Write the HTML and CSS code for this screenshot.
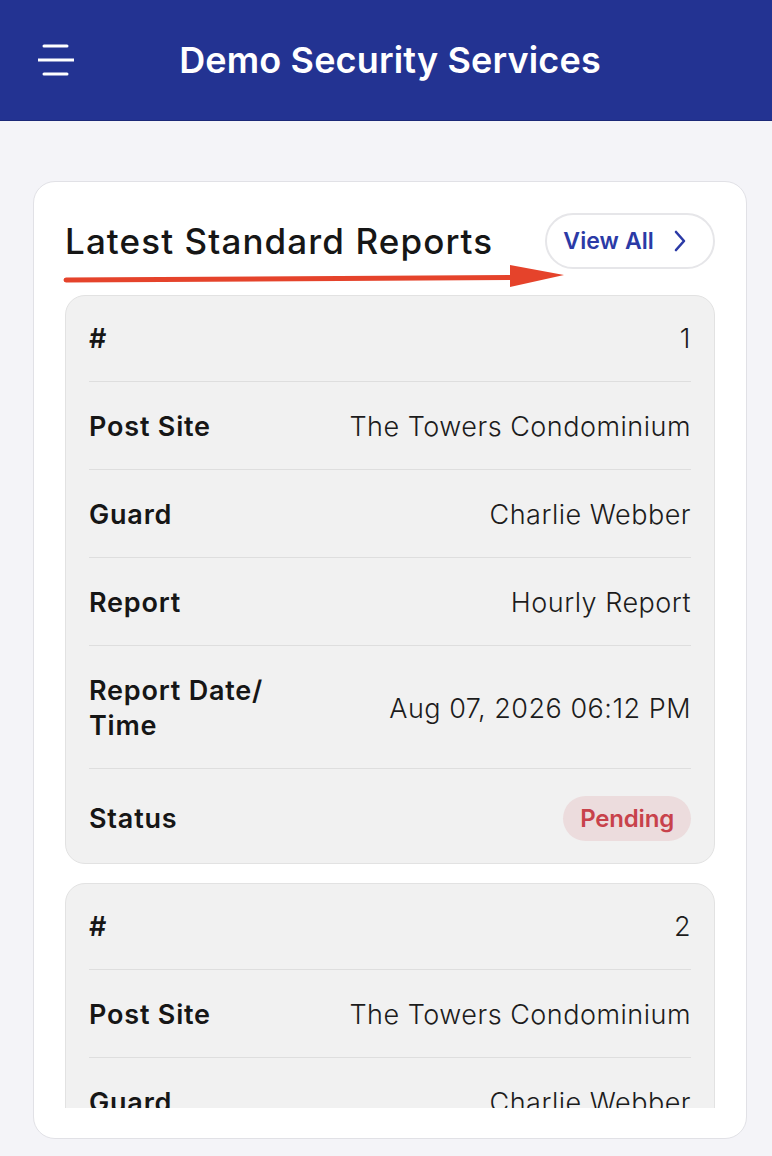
FILE: index.html
```html
<!DOCTYPE html>
<html lang="en">
<head>
    <meta charset="UTF-8">
    <meta name="viewport" content="width=device-width, initial-scale=1.0">
    <title>Demo Security Services</title>
    <link rel="stylesheet" href="styles.css">
</head>
<body>
    <header class="topbar">
        <button class="menu-btn" aria-label="Menu">
            <svg width="36" height="34" viewBox="0 0 36 34">
                <path d="M6 3H29M0 17H36M6 31H29" stroke="#fff" stroke-width="3" stroke-linecap="round"/>
            </svg>
        </button>
        <h1 class="topbar-title">Demo Security Services</h1>
        <span></span>
    </header>

    <main class="page">
        <section class="panel">
            <div class="panel-head">
                <h2>Latest Standard Reports</h2>
                <a class="view-all" href="#">View All
                    <svg width="14" height="22" viewBox="0 0 14 22">
                        <path d="M3 2L11 11L3 20" fill="none" stroke="#2b3aa6" stroke-width="2.6" stroke-linecap="round" stroke-linejoin="round"/>
                    </svg>
                </a>
                <!-- pointer under the heading -->
                <svg class="pointer" width="502" height="26" viewBox="0 0 502 26">
                    <path d="M3 15L450 12.5" stroke="#e5432b" stroke-width="5" stroke-linecap="round"/>
                    <polygon points="447,0 501,10 447,22" fill="#e5432b"/>
                </svg>
            </div>

            <div class="report-list">
                <div class="report">
                    <div class="row"><span class="label">#</span><span class="value">1</span></div>
                    <div class="row"><span class="label">Post Site</span><span class="value">The Towers Condominium</span></div>
                    <div class="row"><span class="label">Guard</span><span class="value">Charlie Webber</span></div>
                    <div class="row"><span class="label">Report</span><span class="value">Hourly Report</span></div>
                    <div class="row"><span class="label">Report Date/<br>Time</span><span class="value">Aug 07, 2026 06:12 PM</span></div>
                    <div class="row"><span class="label">Status</span><span class="badge">Pending</span></div>
                </div>
                <div class="report">
                    <div class="row"><span class="label">#</span><span class="value">2</span></div>
                    <div class="row"><span class="label">Post Site</span><span class="value">The Towers Condominium</span></div>
                    <div class="row"><span class="label">Guard</span><span class="value">Charlie Webber</span></div>
                    <div class="row"><span class="label">Report</span><span class="value">Hourly Report</span></div>
                    <div class="row"><span class="label">Report Date/<br>Time</span><span class="value">Aug 07, 2026 05:12 PM</span></div>
                    <div class="row"><span class="label">Status</span><span class="badge">Pending</span></div>
                </div>
            </div>
        </section>
    </main>
</body>
</html>
```

FILE: styles.css
```css
body {
    margin: 0;
    font-family: Inter, "Noto Sans", sans-serif;
    background-color: #f4f4f8;
    color: #1c1c1c;
}
.topbar {
    height: 121px;
    background-color: #233392;
    display: grid;
    grid-template-columns: 1fr auto 1fr;
    align-items: center;
    padding: 0 38px;
    box-sizing: border-box;
    border-bottom: 1px solid #1b2878;
}
.menu-btn {
    background: none;
    border: none;
    padding: 0;
    width: 36px;
    height: 34px;
    cursor: pointer;
}
.menu-btn svg {
    display: block;
}
.topbar-title {
    margin: 0;
    color: #fff;
    font-size: 36px;
    font-weight: 600;
    letter-spacing: 0.15px;
    position: relative;
    left: 4px;
}
.page {
    padding: 60px 25px 0 33px;
}
.panel {
    background-color: #fff;
    border: 1px solid #e1e1e6;
    border-radius: 22px;
    padding: 31px 31px 30px;
}
.panel-head {
    position: relative;
    display: flex;
    justify-content: space-between;
    align-items: center;
    margin-bottom: 26px;
}
.panel-head h2 {
    margin: 0;
    font-size: 35px;
    font-weight: 500;
    letter-spacing: 1.1px;
    color: #161616;
}
.view-all {
    display: flex;
    align-items: center;
    gap: 19px;
    height: 56px;
    box-sizing: border-box;
    padding: 0 26px 0 16px;
    border: 2px solid #e6e6e9;
    border-radius: 28px;
    color: #2b3aa6;
    font-size: 23px;
    font-weight: 600;
    text-decoration: none;
    letter-spacing: 0.1px;
}
.view-all svg {
    display: block;
}
.pointer {
    position: absolute;
    left: -2px;
    top: 52px;
}
.report-list {
    height: 813px;
    overflow: hidden;
    display: flex;
    flex-direction: column;
    gap: 19px;
}
.report {
    flex-shrink: 0;
    background-color: #f1f1f1;
    border: 1px solid #e2e2e2;
    border-radius: 20px;
    padding: 0 23px;
}
.row {
    display: flex;
    justify-content: space-between;
    align-items: center;
    padding: 27px 0 25px;
    line-height: 35px;
    font-size: 27px;
    border-bottom: 1px solid #dedede;
}
.row:first-child {
    padding-top: 25px;
}
.row:last-child {
    border-bottom: none;
    padding: 27px 0 22px;
}
.label {
    font-weight: 600;
    letter-spacing: 0.8px;
    color: #161616;
}
.value {
    font-weight: 300;
    color: #1c1c1c;
    letter-spacing: 0.5px;
}
.badge {
    background-color: #ecdcdd;
    color: #c8424b;
    font-size: 24px;
    font-weight: 600;
    line-height: 29px;
    padding: 8px 17px;
    border-radius: 23px;
    letter-spacing: -0.2px;
}
```
